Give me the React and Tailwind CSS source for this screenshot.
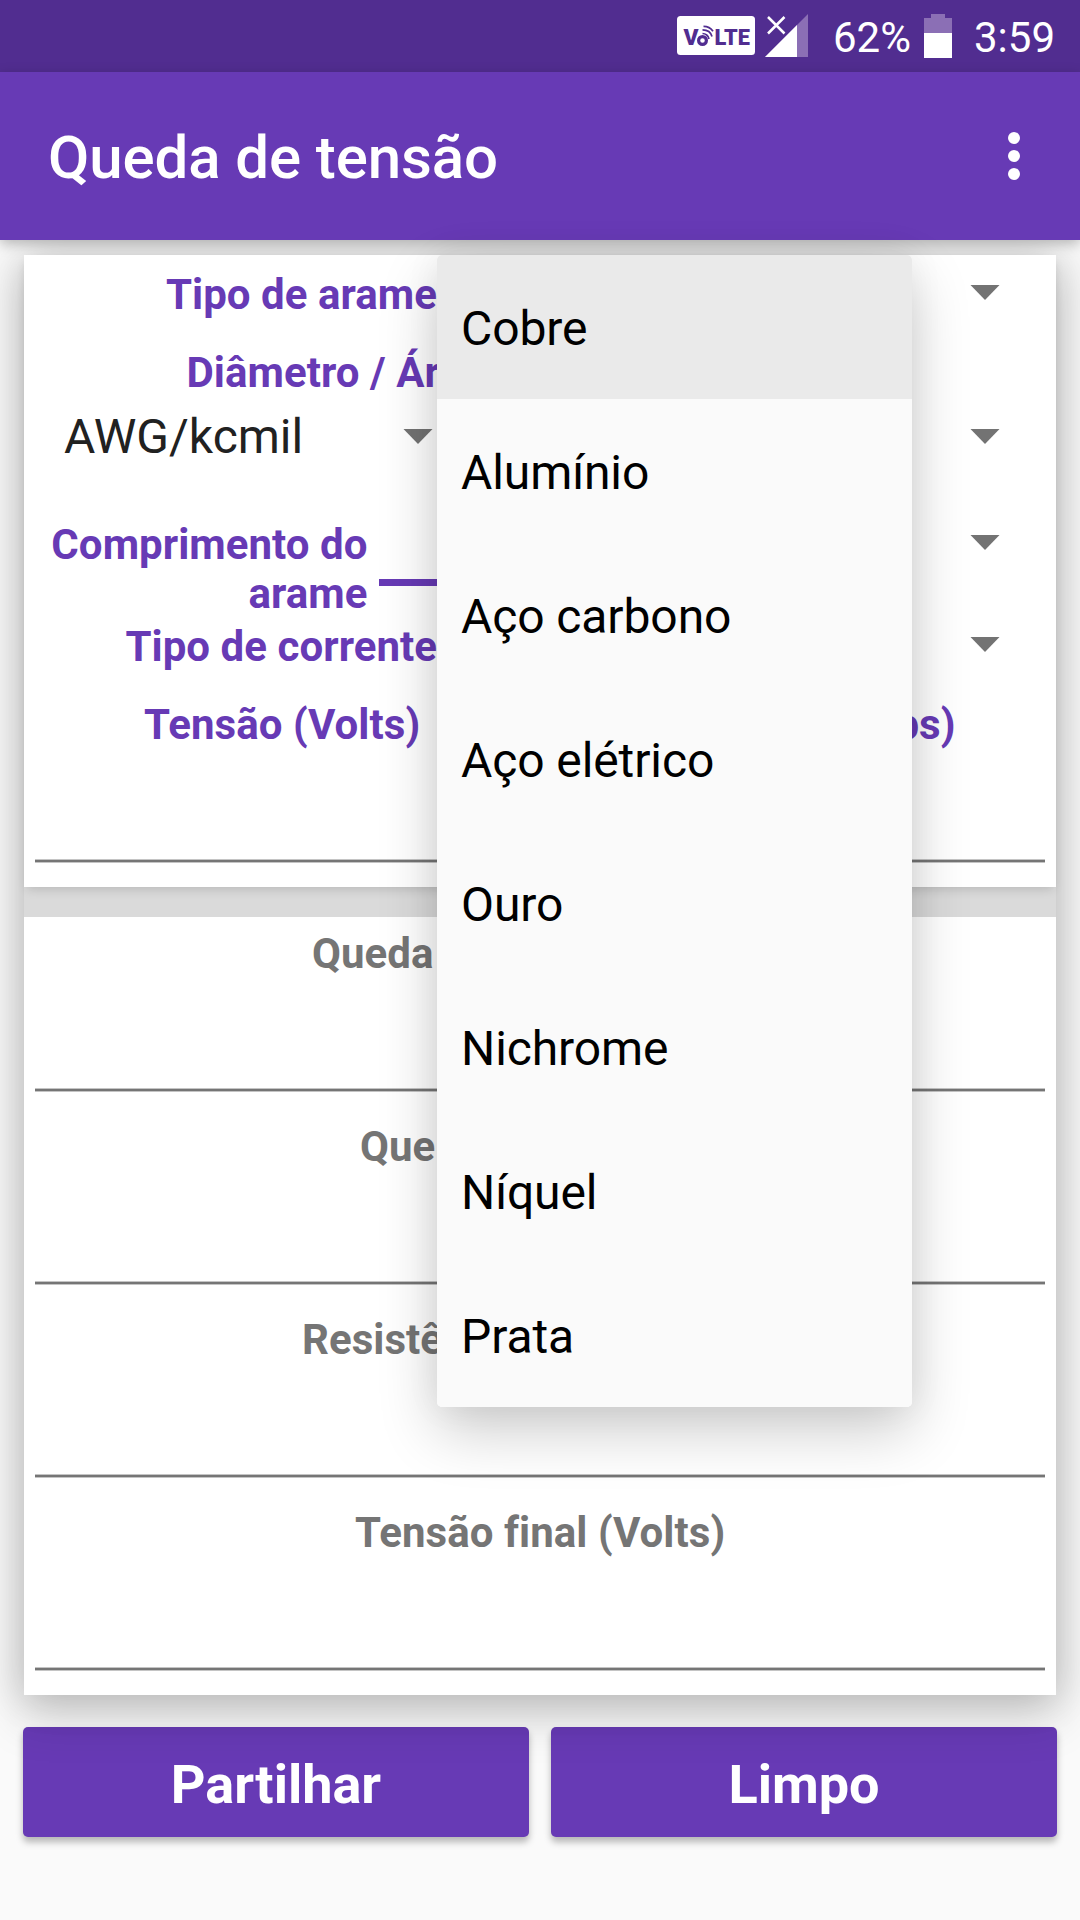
const materials = ["Cobre", "Alumínio", "Aço carbono", "Aço elétrico", "Ouro", "Nichrome", "Níquel", "Prata"];

const results = [
  { label: "Queda", pad: "pl-[288px]" },
  { label: "Que", pad: "pl-[336px]" },
  { label: "Resistê", pad: "pl-[278px]" },
  { label: "Tensão final (Volts)", pad: "pl-[331px]" },
];

function Caret({ className = "" }) {
  return (
    <svg className={`h-[15px] w-[30px] shrink-0 ${className}`} viewBox="0 0 30 15">
      <path d="M0.5 0h29L15 15z" fill="#737373" />
    </svg>
  );
}

function Rule() {
  return <div className="mx-[11px] h-1 border-y border-[#c4c4c4] bg-[#757575]" />;
}

function StatusBar() {
  return (
    <div className="flex h-[72px] bg-[#512d90] pl-[677px] text-[42px] leading-[49px] text-white">
      <svg className="mt-4 h-[39px] w-[78px]" viewBox="0 0 78 39">
        <rect width="78" height="39" rx="3.5" fill="#fff" />
        <g fill="#512d90" fontFamily="Roboto" fontWeight="900" fontSize="22">
          <text x="6.500" y="29" textLength="15" lengthAdjust="spacingAndGlyphs">V</text>
          <text x="37.500" y="29" textLength="35.500" lengthAdjust="spacingAndGlyphs">LTE</text>
        </g>
        <g fill="none" stroke="#512d90">
          <circle cx="25.500" cy="24.500" r="3.900" strokeWidth="3.200" />
          <path d="M25.500 17.500c3 0 6 2.200 6.500 5.500M25.500 13.800c5 0 8.500 2.700 9.500 6.700M26.500 10.300c4.500 0 7.500 1.900 9.500 5" strokeWidth="1.700" />
        </g>
      </svg>
      <svg className="mt-[14px] ml-[10px] h-[44px] w-[43px]" viewBox="0 0 43 44">
        <path d="M43 0v43H0z" fill="#8b6fb5" />
        <path d="M32 11v32H0z" fill="#fff" />
        <path d="M1 1h20v20H1z" fill="#512d90" />
        <path d="M3 3L19.500 19.500M19.500 3L3 19.500" stroke="#fff" strokeWidth="2.500" />
      </svg>
      <span className="mt-[13px] ml-[25px] w-[76px]">62%</span>
      <svg className="mt-[14px] ml-[15px] h-[44px] w-[28px]" viewBox="0 0 28 44">
        <path d="M0 4h7V0h14v4h7v16H0z" fill="#8b6fb5" />
        <path d="M0 19h28v25H0z" fill="#fff" />
      </svg>
      <span className="mt-[13px] ml-[22px]">3:59</span>
    </div>
  );
}

function MaterialMenu() {
  return (
    <ul className="absolute top-[255px] left-[437px] z-20 w-[475px] overflow-hidden rounded-[5px] bg-[#fafafa] text-[48px] text-black">
      {materials.map((name, i) => (
        <li key={name} className={`flex h-36 items-center pt-[3px] pl-6 ${i === 0 ? "bg-[#eaeaea]" : ""}`}>
          <span className="leading-[56px] tracking-[-0.1px]">{name}</span>
        </li>
      ))}
    </ul>
  );
}

export default function App() {
  return (
    <div className="relative isolate flex h-[1920px] w-[1080px] flex-col overflow-hidden bg-[#fafafa] font-['Roboto',sans-serif]">
      <StatusBar />
      <header className="relative flex h-[168px] items-center justify-between bg-[#673ab5] pr-[60px] pl-12 shadow-[0_4px_12px_rgba(0,0,0,0.26)]">
        <h1 className="mt-1 text-[60px] leading-[70px] font-medium tracking-[-0.1px] text-white">Queda de tensão</h1>
        <svg className="h-[48px] w-3" viewBox="0 0 12 48" fill="#fff">
          <circle cx="6" cy="6" r="6" />
          <circle cx="6" cy="24" r="6" />
          <circle cx="6" cy="42" r="6" />
        </svg>
      </header>

      <main className="relative mx-6 mt-[15px] flex flex-col gap-[30px] text-[42px] leading-[49px] font-bold tracking-[0.05px] whitespace-nowrap before:absolute before:inset-0 before:-z-10 before:bg-[#dadada] before:shadow-[0_0_40px_rgba(0,0,0,0.16),0_18px_44px_4px_rgba(0,0,0,0.17)] before:content-['']">
        <section className="h-[632px] bg-white pt-[15px] text-[#673ab5] shadow-[0_5px_10px_-3px_rgba(0,0,0,0.16)]">
          <div className="flex h-[49px] items-center justify-between pr-14">
            <span className="w-[413px] text-right">Tipo de arame</span>
            <Caret className="-mt-1" />
          </div>
          <div className="mt-[29px] pl-[162.500px]">Diâmetro / Ár</div>
          <div className="mt-[10px] flex h-14 items-center pr-14 pl-10">
            <span className="mt-[3px] w-[339px] text-[48px] leading-[56px] font-normal tracking-normal text-[#212121]">AWG/kcmil</span>
            <Caret className="mt-[3px]" />
            <Caret className="mt-[3px] ml-auto" />
          </div>
          <div className="mt-[56px] flex h-[98px] pr-14">
            <span className="mt-px w-[343.500px] text-right">
              Comprimento do
              <br />
              arame
            </span>
            <div className="mt-[60px] ml-[11.500px] h-[7px] w-[300px] bg-[#673ab5]" />
            <Caret className="mt-4 ml-auto" />
          </div>
          <div className="mt-[5px] flex h-[49px] items-center justify-between pr-14">
            <span className="w-[413px] text-right">Tipo de corrente</span>
            <Caret className="-mt-1" />
          </div>
          <div className="mt-[29px] mb-[110px] flex justify-between pr-[100.500px] pl-[120px]">
            <span>Tensão (Volts)</span>
            <span>ps)</span>
          </div>
          <Rule />
        </section>

        <section className="h-[778px] bg-white pt-3 text-[#757575]">
          {results.map(({ label, pad }) => (
            <div key={label} className="h-[193px]">
              <div className={`mb-[110px] ${pad}`}>{label}</div>
              <Rule />
            </div>
          ))}
        </section>
      </main>

      <footer className="relative -z-20 mt-8 flex gap-[22px] px-[23px] text-[54px] font-bold text-white">
        <button className="h-[110px] flex-1 rounded-[5px] bg-[#673ab5] pt-1 shadow-[0_5px_7px_rgba(0,0,0,0.28)]">Partilhar</button>
        <button className="h-[110px] flex-1 rounded-[5px] bg-[#673ab5] pt-1 shadow-[0_5px_7px_rgba(0,0,0,0.28)]">Limpo</button>
      </footer>

      <div className="absolute top-[255px] left-[437px] z-10 h-[1152px] w-[475px] rounded-[5px] shadow-[0_0_36px_rgba(0,0,0,0.06),0_24px_60px_rgba(0,0,0,0.2)]" />
      <MaterialMenu />
    </div>
  );
}
